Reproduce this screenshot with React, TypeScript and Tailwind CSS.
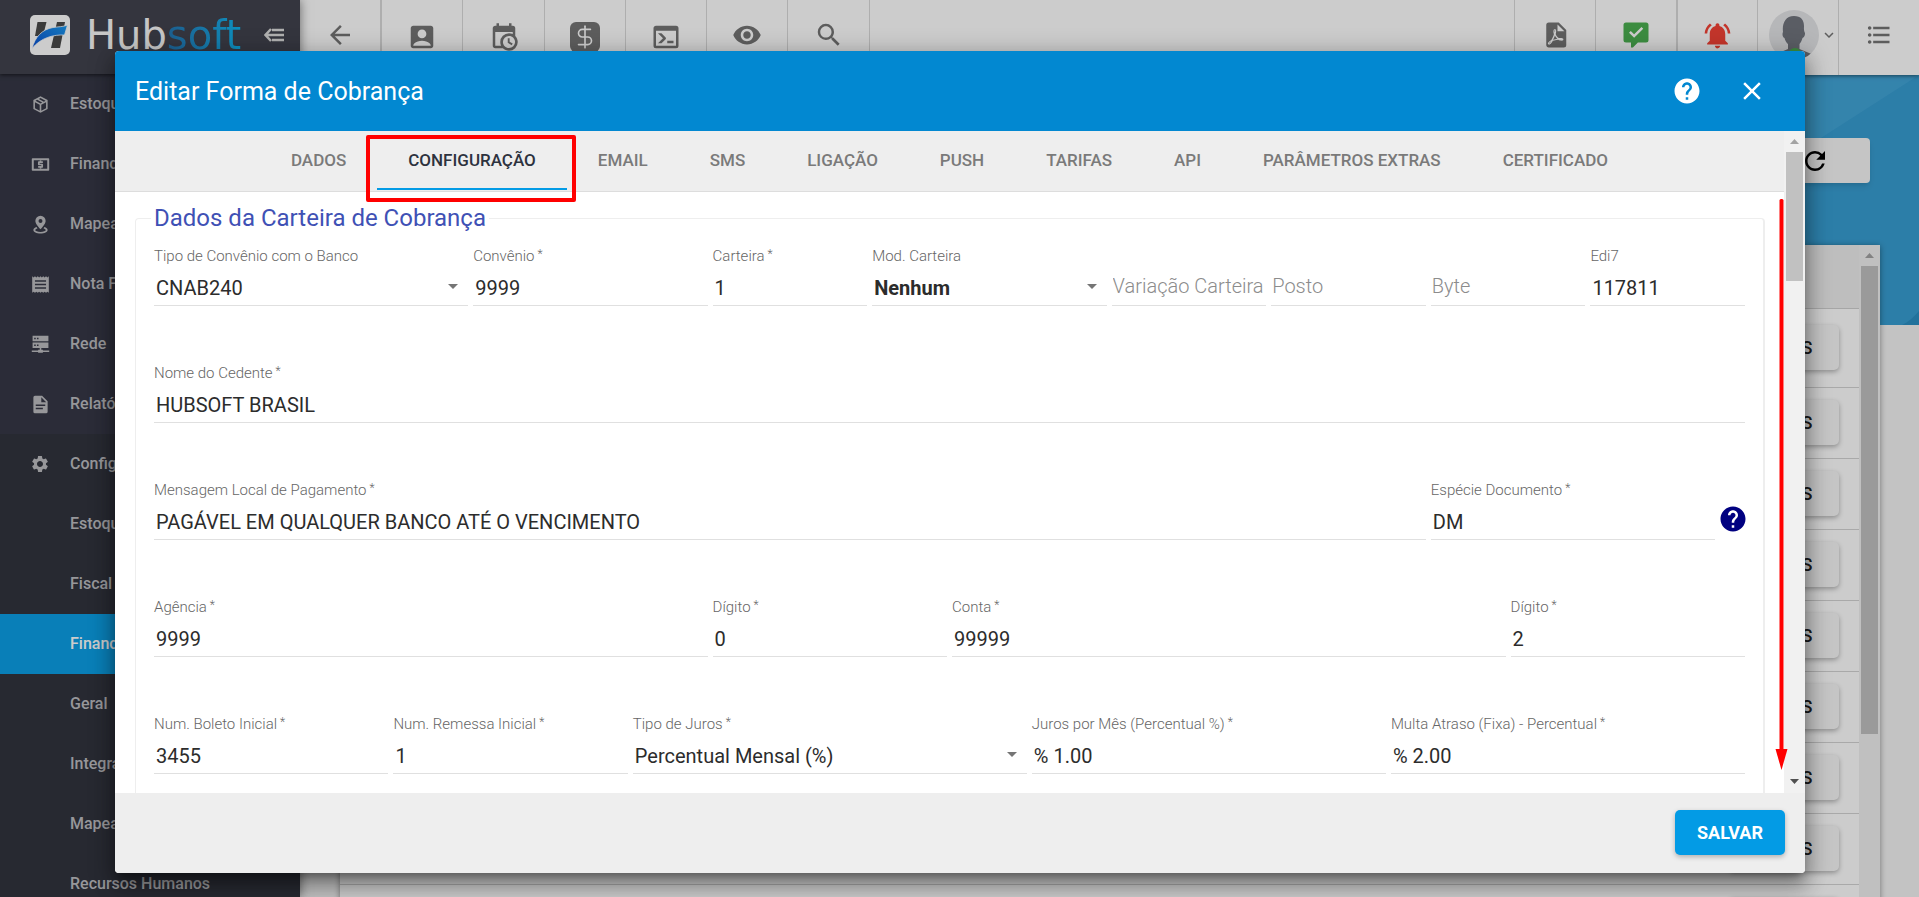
import { useState } from "react";
import type { ReactNode } from "react";
import { clsx } from "clsx";
import { DollarSign } from "lucide-react";
import {
  MdAccountBox,
  MdArrowBack,
  MdArrowDropDown,
  MdClose,
  MdFormatListBulleted,
  MdHelp,
  MdKeyboardArrowDown,
  MdNotificationsActive,
  MdRefresh,
  MdSettings,
  MdVisibility,
} from "react-icons/md";

interface IconPathProps {
  d: string;
  size?: number;
}

function IconPath({ d, size = 30 }: IconPathProps) {
  return (
    <svg width={size} height={size} viewBox="0 0 24 24" fill="currentColor" aria-hidden="true">
      <path fillRule="evenodd" d={d} />
    </svg>
  );
}

const paths = {
  calendarClock:
    "M15,13H16.5V15.82L18.94,17.23L18.19,18.53L15,16.69V13M19,8H5V19H9.67C9.24,18.09 9,17.07 9,16A7,7 0 0,1 16,9C17.07,9 18.09,9.24 19,9.67V8M5,21C3.89,21 3,20.1 3,19V5C3,3.89 3.89,3 5,3H6V1H8V3H16V1H18V3H19A2,2 0 0,1 21,5V11.1C22.24,12.36 23,14.09 23,16A7,7 0 0,1 16,23C14.09,23 12.36,22.24 11.1,21H5M16,11.15A4.85,4.85 0 0,0 11.15,16C11.15,18.68 13.32,20.85 16,20.85A4.85,4.85 0 0,0 20.85,16C20.85,13.32 18.68,11.15 16,11.15Z",
  console:
    "M20,19V7H4V19H20M20,3A2,2 0 0,1 22,5V19A2,2 0 0,1 20,21H4A2,2 0 0,1 2,19V5C2,3.89 2.9,3 4,3H20M13,17V15H18V17H13M9.58,13L5.57,9H8.4L11.7,12.3C12.09,12.69 12.09,13.33 11.7,13.72L8.42,17H5.59L9.58,13Z",
  magnify:
    "M9.5,3A6.5,6.5 0 0,1 16,9.5C16,11.11 15.41,12.59 14.44,13.73L14.71,14H15.5L20.5,19L19,20.5L14,15.5V14.71L13.73,14.44C12.59,15.41 11.11,16 9.5,16A6.5,6.5 0 0,1 3,9.5A6.5,6.5 0 0,1 9.5,3M9.5,5C7,5 5,7 5,9.5C5,12 7,14 9.5,14C12,14 14,12 14,9.5C14,7 12,5 9.5,5Z",
  pdf: "M14,9H19.5L14,3.5V9M7,2H15L21,8V20A2,2 0 0,1 19,22H7C5.89,22 5,21.1 5,20V4A2,2 0 0,1 7,2M11.93,12.44C12.34,13.34 12.86,14.08 13.46,14.59L13.87,14.91C13,15.07 11.8,15.35 10.53,15.84V15.84L10.42,15.88L10.92,14.84C11.37,13.97 11.7,13.18 11.93,12.44M18.41,16.25C18.59,16.07 18.68,15.84 18.69,15.59C18.72,15.39 18.67,15.2 18.57,15.04C18.28,14.57 17.53,14.35 16.29,14.35L15,14.42L14.13,13.84C13.5,13.32 12.93,12.41 12.53,11.28L12.57,11.14C12.9,9.81 13.21,8.2 12.55,7.54C12.39,7.38 12.17,7.3 11.94,7.3H11.7C11.33,7.3 11,7.69 10.91,8.07C10.54,9.4 10.76,10.13 11.13,11.34V11.35C10.88,12.23 10.56,13.25 10.05,14.28L9.09,16.08L8.2,16.57C7,17.32 6.43,18.16 6.32,18.69C6.28,18.88 6.3,19.05 6.37,19.23L6.4,19.28L6.88,19.59L7.32,19.7C8.13,19.7 9.05,18.75 10.29,16.63L10.47,16.56C11.5,16.23 12.78,16 14.5,15.81C15.53,16.32 16.74,16.55 17.5,16.55C17.94,16.55 18.24,16.44 18.41,16.25M8.83,17C8.18,18.19 7.59,18.85 7.14,19C7.19,18.62 7.64,17.96 8.35,17.31L8.83,17M11.85,10.09C11.62,9.19 11.61,8.46 11.78,8.04L11.85,7.92L12,7.97C12.17,8.21 12.19,8.53 12.09,9.07L12.06,9.23L11.9,10.05L11.85,10.09Z",
  messageCheck:
    "M4,2H20A2,2 0 0,1 22,4V16A2,2 0 0,1 20,18H13.5L9.5,22H8V18H4A2,2 0 0,1 2,16V4A2,2 0 0,1 4,2M10.5,14.2L17.8,6.9L16.4,5.5L10.5,11.4L7.8,8.7L6.4,10.1Z",
  box: "M12,1.5L21,6.2V17.8L12,22.5L3,17.8V6.2L12,1.5M12,3.8L9.9,4.9L16.3,8.5L18.3,7.3L12,3.8M7.8,6L5.7,7.2L12,10.6L14.1,9.5L7.8,6M5,9V16.6L11,19.8V12.3L5,9M19,9L13,12.3V19.8L19,16.6V9Z",
  cash: "M2,4H22A1,1 0 0,1 23,5V19A1,1 0 0,1 22,20H2A1,1 0 0,1 1,19V5A1,1 0 0,1 2,4M3.5,6.5V17.5H20.5V6.5H3.5M11,17H13V16H14.2A1,1 0 0,0 15.2,15V12A1,1 0 0,0 14.2,11H11V10H15V8H13V7H11V8H9.8A1,1 0 0,0 8.8,9V12A1,1 0 0,0 9.8,13H13V14H9V16H11V17Z",
  marker:
    "M12,1A6.5,6.5 0 0,1 18.5,7.5C18.5,11.5 12,18 12,18C12,18 5.5,11.5 5.5,7.5A6.5,6.5 0 0,1 12,1M12,5A2.5,2.5 0 1,0 12,10A2.5,2.5 0 1,0 12,5M21,19C21,21.5 17,23.5 12,23.5C7,23.5 3,21.5 3,19C3,17.4 4.6,16 7.1,15.2L8.2,16.9C6.6,17.4 5.3,18.2 5.3,19C5.3,20.3 8.3,21.4 12,21.4C15.7,21.4 18.7,20.3 18.7,19C18.7,18.2 17.4,17.4 15.8,16.9L16.9,15.2C19.4,16 21,17.4 21,19Z",
  receipt:
    "M1.5,1.5L3.3,3L5,1.5L6.8,3L8.5,1.5L10.3,3L12,1.5L13.7,3L15.5,1.5L17.2,3L19,1.5L20.7,3L22.5,1.5V22.5L20.7,21L19,22.5L17.2,21L15.5,22.5L13.7,21L12,22.5L10.3,21L8.5,22.5L6.8,21L5,22.5L3.3,21L1.5,22.5V1.5M5,6.5V8.5H19V6.5H5M5,11V13H19V11H5M5,15.5V17.5H19V15.5H5Z",
  server:
    "M2,1H22V8H2V1M4,3.5V5.5H6V3.5H4M7.5,3.5V5.5H9.5V3.5H7.5M2,9.5H22V16.5H2V9.5M4,12V14H6V12H4M7.5,12V14H9.5V12H7.5M11,16.5H13V18.5H15V19.5H23V21.5H15V22.5H9V21.5H1V19.5H9V18.5H11Z",
  document:
    "M14,1H5A2,2 0 0,0 3,3V21A2,2 0 0,0 5,23H19A2,2 0 0,0 21,21V8L14,1M13,9V2.8L19.2,9H13M6,12H18V14H6V12M6,16H15V18H6V16Z",
};

const menuItems = [
  { label: "Estoque", icon: <IconPath d={paths.box} size={19} /> },
  { label: "Financeiro", icon: <IconPath d={paths.cash} size={19} /> },
  { label: "Mapeamento", icon: <IconPath d={paths.marker} size={19} /> },
  { label: "Nota Fiscal", icon: <IconPath d={paths.receipt} size={19} /> },
  { label: "Rede", icon: <IconPath d={paths.server} size={19} /> },
  { label: "Relatórios", icon: <IconPath d={paths.document} size={19} /> },
];

const settingsItems = [
  "Estoque",
  "Fiscal",
  "Financeiro",
  "Geral",
  "Integrações",
  "Mapeamento",
  "Recursos Humanos",
];

const tabs = [
  "DADOS",
  "CONFIGURAÇÃO",
  "EMAIL",
  "SMS",
  "LIGAÇÃO",
  "PUSH",
  "TARIFAS",
  "API",
  "PARÂMETROS EXTRAS",
  "CERTIFICADO",
];

function Logo() {
  return (
    <svg width="40" height="40" viewBox="0 0 40 40" aria-hidden="true">
      <defs>
        <linearGradient id="swoosh" x1="0" y1="1" x2="1" y2="0">
          <stop offset="0" stopColor="#0a4fd0" />
          <stop offset="1" stopColor="#1c9cf0" />
        </linearGradient>
      </defs>
      <rect width="40" height="40" rx="5" fill="#ffffff" />
      <path d="M7.500 7h9l-3.500 14H5z" fill="#4a4a4a" />
      <path d="M27 7h8l-5 26h-9z" fill="#4a4a4a" />
      <path
        d="M2 33.500C5 22 12 14.500 23 12.500C29 11.500 33 12 37.500 10L34.500 20C24 19.500 11 22.500 2 33.500z"
        fill="url(#swoosh)"
        stroke="#ffffff"
        strokeWidth="0.8"
      />
    </svg>
  );
}

function Sidebar() {
  return (
    <aside className="relative z-10 flex w-[300px] shrink-0 flex-col overflow-hidden bg-[#363846] text-[#bdbdc1] shadow-[0_0_10px_rgba(0,0,0,0.5)]">
      <div className="flex h-[74px] shrink-0 items-start bg-[#41434e] pt-[15px] pl-[30px] shadow-[0_1px_4px_rgba(0,0,0,0.6)]">
        <Logo />
        <span className="ml-4 font-['DejaVu_Sans',sans-serif] text-[40px] leading-10 text-[#f8f8f8]">
          Hub<span className="bg-linear-to-r from-[#2377b4] to-[#0db4f0] bg-clip-text text-transparent">soft</span>
        </span>
        <button type="button" aria-label="Recolher menu" className="mt-3 mr-4 ml-auto">
          <svg width="20" height="16" viewBox="0 0 20 16" fill="none" stroke="#dcdcdc" strokeWidth="2.500">
            <path d="M7 2L1.500 8L7 14M2 8H20M8 3H20M8 13H20" />
          </svg>
        </button>
      </div>
      <nav className="flex flex-col text-[16px] font-medium">
        {menuItems.map((item) => (
          <a key={item.label} href="#" className="flex h-[60px] items-center pl-[31px]">
            {item.icon}
            <span className="ml-5">{item.label}</span>
          </a>
        ))}
        <div className="flex flex-col bg-[#31343e]">
          <a href="#" className="flex h-[60px] items-center pl-[30px]">
            <MdSettings size={20} />
            <span className="ml-5">Configurações</span>
          </a>
          {settingsItems.map((label) => (
            <a
              key={label}
              href="#"
              className={clsx(
                "flex h-[60px] shrink-0 items-center pl-[70px]",
                label === "Financeiro" && "bg-[#0c9fe7] text-white"
              )}
            >
              {label}
            </a>
          ))}
        </div>
      </nav>
    </aside>
  );
}

interface ToolButtonProps {
  label: string;
  children: ReactNode;
  className?: string;
}

function ToolButton({ label, children, className }: ToolButtonProps) {
  return (
    <button type="button" aria-label={label} className={clsx("flex shrink-0 border-[#dadada]", className)}>
      {children}
    </button>
  );
}

function Toolbar() {
  return (
    <header className="z-[5] flex h-[75px] shrink-0 justify-between bg-white text-[#757575] shadow-[0_1px_4px_rgba(0,0,0,0.5)]">
      <div className="flex">
        <ToolButton label="Voltar" className="w-[82px] justify-center border-r-2 pt-5">
          <MdArrowBack size={30} />
        </ToolButton>
        <ToolButton label="Clientes" className="w-[81px] justify-center border-r pt-[22px]">
          <MdAccountBox size={30} />
        </ToolButton>
        <ToolButton label="Agenda" className="w-[82px] justify-center border-r pt-[22px]">
          <IconPath d={paths.calendarClock} />
        </ToolButton>
        <ToolButton label="Cobranças" className="w-[81px] justify-center border-r pt-[22px]">
          <span className="flex size-[30px] items-center justify-center rounded-md bg-[#757575] text-white">
            <DollarSign size={26} strokeWidth={1.5} />
          </span>
        </ToolButton>
        <ToolButton label="Console" className="w-[81px] justify-center border-r pt-[22px]">
          <IconPath d={paths.console} />
        </ToolButton>
        <ToolButton label="Visualizar" className="w-[81px] justify-center border-r pt-5">
          <MdVisibility size={30} />
        </ToolButton>
        <ToolButton label="Pesquisar" className="w-[82px] justify-center border-r pt-5">
          <IconPath d={paths.magnify} />
        </ToolButton>
      </div>
      <div className="flex">
        <ToolButton label="Relatórios PDF" className="w-[81px] justify-center border-l pt-5">
          <IconPath d={paths.pdf} />
        </ToolButton>
        <ToolButton label="Mensagens" className="w-[81px] justify-center border-l pt-5 text-[#4caf50]">
          <IconPath d={paths.messageCheck} />
        </ToolButton>
        <ToolButton label="Notificações" className="w-[81px] justify-center border-l-2 pt-5 text-[#f44336]">
          <MdNotificationsActive size={31} />
        </ToolButton>
        <ToolButton label="Perfil" className="w-[81px] justify-end border-l pt-[10px]">
          <svg width="50" height="50" viewBox="0 0 50 50" aria-hidden="true">
            <defs>
              <clipPath id="avatar">
                <circle cx="25" cy="25" r="25" />
              </clipPath>
            </defs>
            <g clipPath="url(#avatar)">
              <rect width="50" height="50" fill="#e4e5e8" />
              <path
                d="M25 6c7 0 10 4 10 10 0 2-.3 4 .5 6 1.500 2-.5 6-2 6-.8 3-2 5-3 6v5l12 5v8H7v-8l12-5v-5c-1.500-1-3-4-3.500-6-2-1-2.500-4-1.500-6-1-8 2-16 11-16z"
                fill="#71757e"
              />
            </g>
            <circle cx="26" cy="45" r="7" fill="#4caf50" />
          </svg>
          <MdKeyboardArrowDown size={18} className="mt-4 ml-px" />
        </ToolButton>
        <ToolButton label="Atalhos" className="w-[81px] justify-center border-l pt-[21px]">
          <MdFormatListBulleted size={28} />
        </ToolButton>
      </div>
    </header>
  );
}

function ScrollArrow({ up, className }: { up?: boolean; className: string }) {
  return (
    <svg width="9" height="5" viewBox="0 0 9 5" className={className} fill="currentColor" aria-hidden="true">
      <path d={up ? "M0 5L4.500 0L9 5z" : "M0 0L4.500 5L9 0z"} />
    </svg>
  );
}

function Page() {
  return (
    <main className="relative flex grow flex-col overflow-hidden bg-[#f4f4f4] pr-[39px] pl-10">
      <svg
        className="absolute inset-x-0 top-0 h-[250px] w-full bg-[#389ed2]"
        viewBox="0 0 1619 250"
        preserveAspectRatio="none"
        aria-hidden="true"
      >
        <path d="M0 0H1619L1230 250H0z" fill="#42a5d8" />
        <path d="M1619 236C1614 242 1608 247 1602 250H1619z" fill="#2b8fc4" />
      </svg>
      <div className="relative mt-[63px] flex justify-end pr-[10px]">
        <button
          type="button"
          aria-label="Atualizar"
          className="flex h-[45px] w-[110px] items-center justify-center rounded bg-[#f7f7f7] text-black shadow-md"
        >
          <MdRefresh size={30} />
        </button>
      </div>
      <section className="relative mt-[62px] flex grow bg-white shadow-[0_1px_6px_rgba(0,0,0,0.4)]">
        <table className="h-fit grow border-collapse">
          <thead>
            <tr className="h-[63px] border-b border-[#d0d0d0] bg-[#eeeeee]">
              <th aria-label="Ações" />
            </tr>
          </thead>
          <tbody>
            {Array.from({ length: 9 }).map((_, i) => (
              <tr key={i} className={clsx("border-b border-[#d4d4d4]", i === 0 ? "h-[79px]" : "h-[71px]")}>
                <td className="pr-5 text-right">
                  <button
                    type="button"
                    className="h-[45px] w-[110px] rounded-[5px] bg-[#f7f7f7] align-middle text-[18px] font-medium text-[#212121] shadow-[0_2px_5px_rgba(0,0,0,0.3)]"
                  >
                    AÇÕES
                  </button>
                </td>
              </tr>
            ))}
          </tbody>
        </table>
        <div className="flex w-[21px] shrink-0 flex-col items-center bg-[#f1f1f1]">
          <ScrollArrow up className="my-2 text-[#a3a3a3]" />
          <div className="h-[468px] w-[17px] bg-[#c1c1c1]" />
        </div>
      </section>
    </main>
  );
}

interface FieldProps {
  id: string;
  label: string;
  value?: string;
  required?: boolean;
  select?: boolean;
  bold?: boolean;
  help?: boolean;
  className: string;
}

function Field({ id, label, value, required, select, bold, help, className }: FieldProps) {
  const control =
    "h-10 w-full min-w-0 appearance-none rounded-none border-b border-[#e0e0e0] bg-transparent text-[20px] text-[#2c2c2c] outline-none";

  return (
    <div className={clsx("flex min-w-0 items-end", className)}>
      <div className="relative min-w-0 grow">
        {value && (
          <label htmlFor={id} className="block h-5 text-[15px] leading-5 font-light whitespace-nowrap text-[#666666]">
            {label}
            {required && <span className="ml-[3px] align-top text-[12px] leading-4">*</span>}
          </label>
        )}
        {select ? (
          <select id={id} className={clsx(control, "pt-[5px] pl-[2px]", bold && "font-bold")} defaultValue={value}>
            <option>{value}</option>
          </select>
        ) : (
          <input
            id={id}
            type="text"
            aria-label={value ? undefined : label}
            placeholder={value ? undefined : label}
            defaultValue={value}
            className={clsx(
              control,
              value ? "pt-1 pl-[2px]" : "pl-px font-light placeholder:text-[#8c8c8c]"
            )}
          />
        )}
        {select && (
          <MdArrowDropDown size={24} className="pointer-events-none absolute right-[3px] bottom-2 text-[#757575]" />
        )}
      </div>
      {help && (
        <button type="button" aria-label="Ajuda" className="-mr-[3px] mb-[6px] ml-[3px] w-[30px] shrink-0 text-[#000080]">
          <MdHelp size={30} />
        </button>
      )}
    </div>
  );
}

function EditDialog() {
  const [activeTab, setActiveTab] = useState("CONFIGURAÇÃO");

  return (
    <div
      role="dialog"
      aria-labelledby="dialog-title"
      className="relative flex grow flex-col overflow-hidden rounded bg-white shadow-[0_7px_8px_-4px_rgba(0,0,0,0.3),0_13px_19px_2px_rgba(0,0,0,0.24),0_5px_24px_4px_rgba(0,0,0,0.22)]"
    >
      <div className="flex h-20 shrink-0 items-center bg-[#0288d1] pr-[38px] pl-5 text-white">
        <h2 id="dialog-title" className="grow pt-[2px] text-[25px]">
          Editar Forma de Cobrança
        </h2>
        <button type="button" aria-label="Ajuda" className="mr-[35px]">
          <MdHelp size={30} />
        </button>
        <button type="button" aria-label="Fechar">
          <MdClose size={30} />
        </button>
      </div>

      <div className="flex min-h-0 grow">
        <div className="min-w-0 grow overflow-hidden">
          <div role="tablist" className="flex h-[61px] justify-center border-b border-[#dddddd] bg-[#eeeeee]">
            {tabs.map((tab) => (
              <button
                key={tab}
                type="button"
                role="tab"
                aria-selected={tab === activeTab}
                onClick={() => setActiveTab(tab)}
                className={clsx(
                  "mb-px border-b-2 px-[31px] pt-[2px] text-[17px] font-medium whitespace-nowrap",
                  tab === activeTab ? "border-[#039be5] text-[#2d323e]" : "border-transparent text-[#7a7a7a]"
                )}
              >
                {tab}
              </button>
            ))}
          </div>

          <fieldset className="mt-3 mr-[19px] ml-5 rounded border border-r-2 border-[#eeeeee] px-[18px] pt-[14px] pb-20">
            <legend className="-ml-[3px] px-[3px] text-[24px] leading-7 text-[#3f51b5]">
              Dados da Carteira de Cobrança
            </legend>
            <div className="grid grid-cols-40 gap-x-[5px] gap-y-[57px]">
              <Field id="tipo-convenio" label="Tipo de Convênio com o Banco" value="CNAB240" select className="col-span-8" />
              <Field id="convenio" label="Convênio" value="9999" required className="col-span-6" />
              <Field id="carteira" label="Carteira" value="1" required className="col-span-4" />
              <Field id="mod-carteira" label="Mod. Carteira" value="Nenhum" select bold className="col-span-6" />
              <Field id="variacao" label="Variação Carteira" className="col-span-4" />
              <Field id="posto" label="Posto" className="col-span-4" />
              <Field id="byte" label="Byte" className="col-span-4" />
              <Field id="edi7" label="Edi7" value="117811" className="col-span-4" />

              <Field id="cedente" label="Nome do Cedente" value="HUBSOFT BRASIL" required className="col-span-40" />

              <Field
                id="mensagem"
                label="Mensagem Local de Pagamento"
                value="PAGÁVEL EM QUALQUER BANCO ATÉ O VENCIMENTO"
                required
                className="col-span-32"
              />
              <Field id="especie" label="Espécie Documento" value="DM" required help className="col-span-8" />

              <Field id="agencia" label="Agência" value="9999" required className="col-span-14" />
              <Field id="digito-agencia" label="Dígito" value="0" required className="col-span-6" />
              <Field id="conta" label="Conta" value="99999" required className="col-span-14" />
              <Field id="digito-conta" label="Dígito" value="2" required className="col-span-6" />

              <Field id="boleto" label="Num. Boleto Inicial" value="3455" required className="col-span-6" />
              <Field id="remessa" label="Num. Remessa Inicial" value="1" required className="col-span-6" />
              <Field id="tipo-juros" label="Tipo de Juros" value="Percentual Mensal (%)" required select className="col-span-10" />
              <Field id="juros" label="Juros por Mês (Percentual %)" value="% 1.00" required className="col-span-9" />
              <Field id="multa" label="Multa Atraso (Fixa) - Percentual" value="% 2.00" required className="col-span-9" />
            </div>
          </fieldset>
        </div>

        <div className="flex w-[21px] shrink-0 flex-col items-center bg-[#f1f1f1]">
          <ScrollArrow up className="my-2 text-[#a3a3a3]" />
          <div className="h-[129px] w-[17px] bg-[#c1c1c1]" />
          <ScrollArrow className="mt-auto mb-[9px] text-[#505050]" />
        </div>
      </div>

      <div className="flex h-20 shrink-0 items-start justify-end bg-[#eeeeee] pt-[17px] pr-5">
        <button
          type="button"
          className="h-[45px] w-[110px] rounded-[5px] bg-[#039be5] text-[18px] font-bold text-white shadow-[0_2px_5px_rgba(0,0,0,0.26)]"
        >
          SALVAR
        </button>
      </div>

      {/* Red callouts: active tab and scroll direction */}
      <div className="pointer-events-none absolute top-[84px] left-[251px] h-[67px] w-[210px] rounded-xs border-4 border-[#ff0000]" />
      <svg
        className="pointer-events-none absolute top-[148px] right-[17px]"
        width="13"
        height="571"
        viewBox="0 0 13 571"
        fill="#ff0000"
        aria-hidden="true"
      >
        <rect x="4.500" y="0" width="4" height="556" rx="1.500" />
        <path d="M0.500 550H12.500L6.500 571z" />
      </svg>
    </div>
  );
}

export default function App() {
  return (
    <div className="relative flex h-screen overflow-hidden font-['Roboto',sans-serif]">
      <Sidebar />
      <div className="flex min-w-0 grow flex-col">
        <Toolbar />
        <Page />
      </div>
      <div className="absolute inset-0 z-20 flex bg-black/20 pt-[51px] pr-[114px] pb-6 pl-[115px]">
        <EditDialog />
      </div>
    </div>
  );
}
